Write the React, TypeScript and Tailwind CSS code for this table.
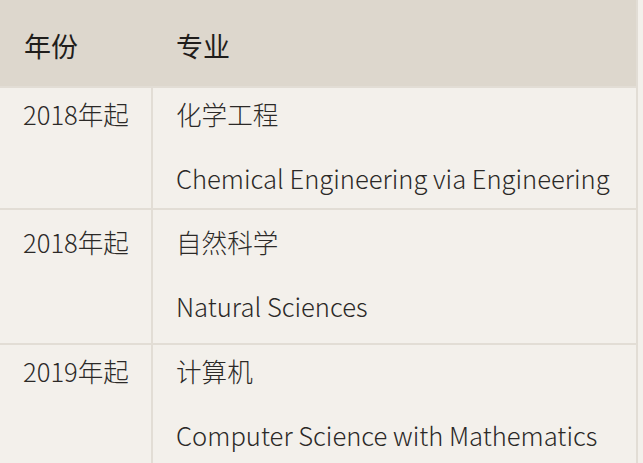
import React from "react";

const rows = [
  { year: "2018年起", zh: "化学工程", en: "Chemical Engineering via Engineering", pt: "pt-[8px]", gap: "gap-[28px]", pb: "pb-[12px]" },
  { year: "2018年起", zh: "自然科学", en: "Natural Sciences", pt: "pt-[14px]", gap: "gap-[28px]", pb: "pb-[19px]" },
  { year: "2019年起", zh: "计算机", en: "Computer Science with Mathematics", pt: "pt-[8px]", gap: "gap-[28px]", pb: "pb-[18px]" },
];

export default function App() {
  return (
    <div
      className="w-[643px] h-[463px] overflow-hidden bg-[#f3f0eb] text-[#2b2927]"
      style={{ fontFamily: '"Noto Sans CJK SC", "Noto Sans", sans-serif' }}
    >
      <div className="w-[638px] border-r-2 border-[#e2ddd5]">
        <div className="flex h-[86px] items-center pt-[6px] bg-[#ddd7cd] text-[27px] font-normal text-[#1f1d1b]">
          <div className="w-[151px] pl-[24px]">年份</div>
          <div className="pl-[25px]">专业</div>
        </div>
        {rows.map((r, i) => (
          <div key={i} className="flex border-t-2 border-[#e2ddd5] text-[25.6px] leading-[36px] font-light">
            <div className={`w-[151px] shrink-0 pl-[23px] ${r.pt}`}>{r.year}</div>
            <div className={`flex flex-1 flex-col border-l-2 border-[#e2ddd5] pl-[23px] ${r.pt} ${r.gap} ${r.pb}`}>
              <div>{r.zh}</div>
              <div>{r.en}</div>
            </div>
          </div>
        ))}
      </div>
    </div>
  );
}
